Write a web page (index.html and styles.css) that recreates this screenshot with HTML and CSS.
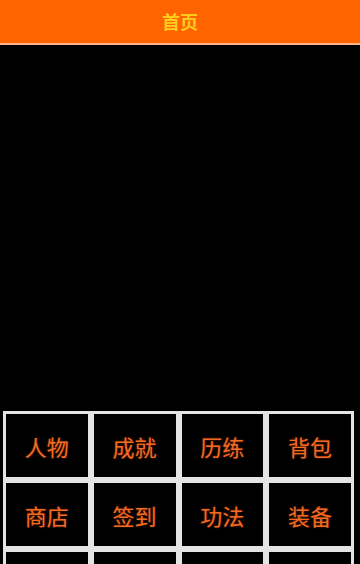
FILE: index.html
```html
<!DOCTYPE html>
<html lang="zh-CN">
<head>
    <meta charset="UTF-8">
    <meta name="viewport" content="width=device-width, initial-scale=1.0">
    <title>首页</title>
    <link rel="stylesheet" href="styles.css">
</head>
<body>
    <div class="header">首页</div>
    <div class="stage"></div>
    <div class="menu">
        <div class="cell">人物</div>
        <div class="cell">成就</div>
        <div class="cell">历练</div>
        <div class="cell">背包</div>
        <div class="cell">商店</div>
        <div class="cell">签到</div>
        <div class="cell">功法</div>
        <div class="cell">装备</div>
        <!-- third row, below the fold -->
        <div class="cell"></div>
        <div class="cell"></div>
        <div class="cell"></div>
        <div class="cell"></div>
    </div>
</body>
</html>
```

FILE: styles.css
```css
* {
    margin: 0;
    padding: 0;
    box-sizing: border-box;
    font-family: "Noto Sans CJK SC", "Noto Sans", sans-serif;
}

body {
    background: #000;
    overflow: hidden;
}

.header {
    height: 45px;
    background: #ff6400;
    border-bottom: 2px solid #ffb48c;
    color: #ffcc1a;
    font-size: 18px;
    font-weight: bold;
    display: flex;
    justify-content: center;
    align-items: center;
    padding-bottom: 2px;
}

.stage {
    height: 366px;
    background: #000;
}

.menu {
    display: grid;
    grid-template-columns: repeat(4, 1fr);
    width: 351px;
    margin-left: 3px;
}

.cell {
    height: 69px;
    border: 3px solid #e4e4e4;
    background: #000;
    color: #f26a24;
    font-size: 22px;
    display: flex;
    justify-content: center;
    align-items: center;
    text-shadow: 0 0 2px rgba(255, 90, 0, 0.5);
}
```
